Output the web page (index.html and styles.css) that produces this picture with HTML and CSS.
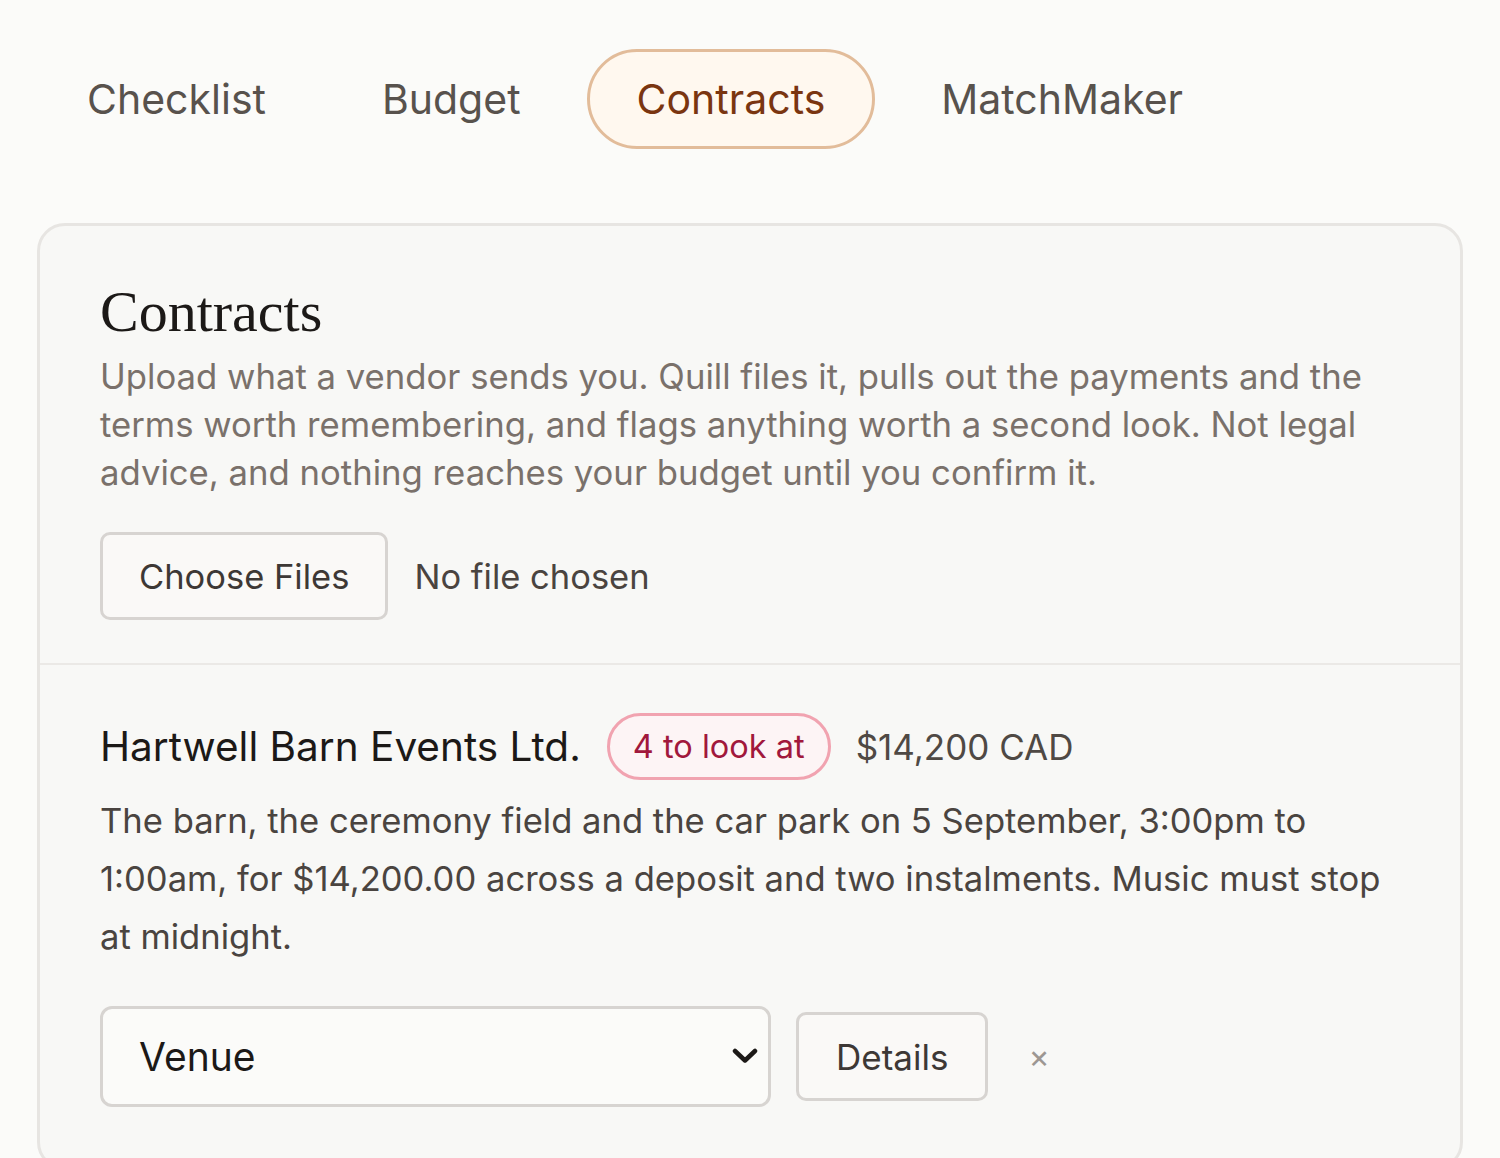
FILE: index.html
```html
<!DOCTYPE html>
<html lang="en">
<head>
    <meta charset="UTF-8">
    <meta name="viewport" content="width=device-width, initial-scale=1.0">
    <title>Contracts</title>
    <link rel="stylesheet" href="styles.css">
</head>
<body>
    <nav class="tabs">
        <a class="tab" href="#">Checklist</a>
        <a class="tab" href="#">Budget</a>
        <a class="tab tab-active" href="#">Contracts</a>
        <a class="tab" href="#">MatchMaker</a>
    </nav>

    <div class="card">
        <div class="card-head">
            <h1>Contracts</h1>
            <p class="lead">Upload what a vendor sends you. Quill files it, pulls out the payments and the terms worth remembering, and flags anything worth a second look. Not legal advice, and nothing reaches your budget until you confirm it.</p>
            <input type="file" class="file-input" multiple>
        </div>

        <div class="contract">
            <div class="contract-top">
                <h2>Hartwell Barn Events Ltd.</h2>
                <span class="badge">4 to look at</span>
                <span class="amount">$14,200 CAD</span>
            </div>
            <p class="summary">The barn, the ceremony field and the car park on 5 September, 3:00pm to 1:00am, for $14,200.00 across a deposit and two instalments. Music must stop at midnight.</p>
            <div class="contract-actions">
                <div class="select-wrap">
                    <select class="category">
                        <option selected>Venue</option>
                        <option>Catering</option>
                        <option>Photography</option>
                        <option>Music</option>
                    </select>
                    <svg class="chevron" width="26" height="16" viewBox="0 0 26 16">
                        <path d="M3 3 L13 12.5 L23 3" fill="none" stroke="#1c1917" stroke-width="4.5" stroke-linecap="round" stroke-linejoin="round"/>
                    </svg>
                </div>
                <button class="btn">Details</button>
                <button class="remove" title="Remove">×</button>
            </div>
        </div>
    </div>
</body>
</html>
```

FILE: styles.css
```css
body {
    margin: 0;
    padding: 49px 37px 0;
    background-color: #fbfbf9;
    font-family: Inter, "Liberation Sans", Arial, sans-serif;
    color: #1f1b18;
}
.tabs {
    display: flex;
    gap: 16px;
}
.tab {
    display: inline-block;
    padding: 22px 47px;
    border: 3px solid transparent;
    border-radius: 60px;
    font-size: 41px;
    line-height: 50px;
    color: #58524d;
    text-decoration: none;
}
.tab-active {
    border-color: #e2bc9a;
    background-color: #fff8ef;
    color: #7a3510;
}
.card {
    margin-top: 74px;
    border: 3px solid #e7e5e2;
    border-radius: 28px;
    background-color: #f8f8f6;
}
.card-head {
    padding: 54px 60px 43px;
    border-bottom: 2px solid #ebe9e6;
}
h1 {
    margin: 0 0 8px;
    font-family: "Liberation Serif", "Times New Roman", serif;
    font-weight: normal;
    font-size: 58px;
    line-height: 64px;
    color: #1c1917;
}
.lead {
    margin: 0 0 36px;
    font-size: 34.7px;
    line-height: 48px;
    color: #7a716b;
}
.file-input {
    font-family: inherit;
    font-size: 34.5px;
    color: #4a4440;
}
.file-input::file-selector-button {
    height: 88px;
    margin-right: 26px;
    padding: 0 36px;
    border: 3px solid #d7d4d1;
    border-radius: 10px;
    background-color: #faf9f7;
    font-family: inherit;
    font-size: 34.5px;
    color: #3d3835;
}
.contract {
    padding: 48px 40px 60px 60px;
}
.contract-top {
    display: flex;
    align-items: center;
}
h2 {
    margin: 0 26px 0 0;
    font-weight: normal;
    font-size: 40.5px;
    line-height: 48px;
    color: #1c1917;
}
.badge {
    padding: 0 23px;
    height: 61px;
    line-height: 61px;
    border: 3px solid #f1a3b0;
    border-radius: 40px;
    background-color: #fdf4f5;
    font-size: 32.5px;
    color: #a1183c;
}
.amount {
    margin-left: 25px;
    font-size: 35px;
    color: #4f4944;
}
.summary {
    margin: 11px 0 41px;
    font-size: 34.6px;
    line-height: 58px;
    color: #4a4440;
}
.contract-actions {
    display: flex;
    align-items: center;
}
.select-wrap {
    position: relative;
}
.category {
    width: 671px;
    height: 101px;
    padding: 0 36px;
    border: 3px solid #d7d4d1;
    border-radius: 12px;
    background-color: #fbfbf9;
    appearance: none;
    font-family: inherit;
    font-size: 39px;
    color: #1c1917;
}
.chevron {
    position: absolute;
    right: 13px;
    top: 42px;
    pointer-events: none;
}
.btn {
    height: 89px;
    margin-left: 25px;
    padding: 0 37px;
    border: 3px solid #d7d4d1;
    border-radius: 10px;
    background-color: #faf9f7;
    font-family: inherit;
    font-size: 35px;
    color: #3d3835;
    cursor: pointer;
}
.remove {
    margin-left: 34px;
    padding: 0 6px;
    border: none;
    background: none;
    font-family: inherit;
    font-size: 32px;
    color: #9d9792;
    cursor: pointer;
}
```
